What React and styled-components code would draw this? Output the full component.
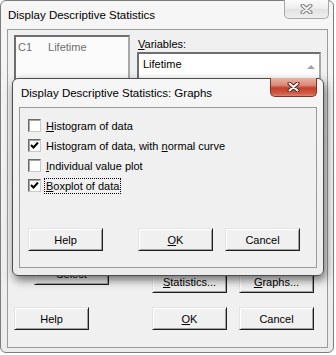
import styled, { createGlobalStyle } from "styled-components";

const GlobalStyle = createGlobalStyle`
  html, body {
    margin: 0;
    padding: 0;
    background: #ffffff;
  }
  body {
    font-family: "Liberation Sans", Arial, sans-serif;
    font-size: 11px;
    color: #000;
  }
`;

const Stage = styled.div`
  position: relative;
  width: 336px;
  height: 355px;
  overflow: hidden;
`;

const Frame = styled.div`
  box-sizing: border-box;
  width: ${(p) => p.$w}px;
  height: ${(p) => p.$h}px;
  display: flex;
  flex-direction: column;
  padding: ${(p) => p.$pad};
  border: 1px solid ${(p) => (p.$active ? "#4d4d4d" : "#7d7d7d")};
  border-radius: 6px;
  background: linear-gradient(#f6f6f6, #ececec);
`;

const Overlay = styled(Frame)`
  position: absolute;
  left: 12px;
  top: 78px;
  box-shadow: 2px 4px 10px rgba(0, 0, 0, 0.55);
`;

const TitleBar = styled.div`
  height: 28px;
  display: flex;
  align-items: flex-start;
  justify-content: space-between;
  flex-shrink: 0;
`;

const TitleText = styled.span`
  margin-top: 8px;
  padding-left: ${(p) => p.$indent}px;
  font-size: 11.5px;
  color: #000;
  white-space: nowrap;
`;

const CaptionClose = styled.div`
  box-sizing: border-box;
  margin-top: -1px;
  margin-right: ${(p) => p.$mr}px;
  width: ${(p) => p.$w}px;
  height: 19px;
  display: flex;
  align-items: center;
  justify-content: center;
  border: 1px solid ${(p) => (p.$red ? "#83342a" : "#a6a6a6")};
  border-top: none;
  border-radius: 0 0 5px 5px;
  background: ${(p) =>
    p.$red
      ? "linear-gradient(#eab1a3 0%, #d98a78 40%, #c2412c 55%, #cf5a44 85%, #e0846e 100%)"
      : "linear-gradient(#fbfbfb, #ececec 50%, #e2e2e2 51%, #eeeeee)"};
`;

const Client = styled.div`
  flex: 1;
  box-sizing: border-box;
  border: 1px solid #9b9b9b;
  background: #f0f0f0;
  display: flex;
  flex-direction: column;
  padding: ${(p) => p.$pad};
`;

const MainArea = styled.div`
  display: flex;
  gap: 7px;
  height: 258px;
`;

const LeftColumn = styled.div`
  width: 116px;
  display: flex;
  flex-direction: column;
`;

const RightColumn = styled.div`
  flex: 1;
  display: flex;
  flex-direction: column;
  padding-right: 1px;
`;

const ListBox = styled.div`
  box-sizing: border-box;
  height: 218px;
  border: 2px solid;
  border-color: #6e6e6e #a8a8a8 #a8a8a8 #6e6e6e;
  background: #fbfbfb;
  padding: 4px 3px 4px 2px;
  color: #6d6d6d;
  display: flex;
  gap: 16px;
`;

const FieldLabel = styled.div`
  margin: 3px 0 0 1px;
  height: 14px;
`;

const TextBox = styled.div`
  box-sizing: border-box;
  height: 160px;
  border: 2px solid;
  border-color: #6e6e6e #a8a8a8 #a8a8a8 #6e6e6e;
  background: #fff;
  display: flex;
  justify-content: space-between;
  padding: 4px 0 0 4px;
`;

const ScrollArrow = styled.div`
  width: 16px;
  display: flex;
  justify-content: center;
  padding-top: 7px;
  &::before {
    content: "";
    border-left: 4px solid transparent;
    border-right: 4px solid transparent;
    border-bottom: 4px solid #a3a3a3;
    height: 0;
  }
`;

const ButtonRow = styled.div`
  display: flex;
  gap: ${(p) => p.$gap}px;
  margin-top: ${(p) => p.$mt};
  margin-bottom: ${(p) => p.$mb || 0}px;
  padding-left: ${(p) => p.$pl || 0}px;
`;

const Button = styled.div`
  box-sizing: border-box;
  width: 75px;
  height: 23px;
  flex-shrink: 0;
  display: flex;
  align-items: center;
  justify-content: center;
  margin-left: ${(p) => p.$ml || 0}px;
  background: #f0f0f0;
  border: 1px solid;
  border-color: #e3e3e3 #1e1e1e #1e1e1e #e3e3e3;
  box-shadow: inset 1px 1px 0 #ffffff, inset -1px -1px 0 #a0a0a0;
  color: #000;
  font-size: 11px;
`;

const Options = styled.div`
  display: flex;
  flex-direction: column;
  gap: 7px;
`;

const OptionRow = styled.div`
  display: flex;
  align-items: center;
  height: 13px;
  gap: 3px;
`;

const Box = styled.div`
  box-sizing: border-box;
  width: 13px;
  height: 13px;
  border: 1px solid;
  border-color: #6a6a6a #c9c9c9 #c9c9c9 #6a6a6a;
  box-shadow: inset 1px 1px 0 #a5a5a5;
  background: #fff;
  display: flex;
  align-items: center;
  justify-content: center;
`;

const OptionLabel = styled.span`
  padding: 0 1px;
  line-height: 14px;
  border: 1px dotted ${(p) => (p.$focus ? "#000" : "transparent")};
  white-space: nowrap;
`;

const CloseGlyph = ({ red }) => (
  <svg width="13" height="10" viewBox="0 0 13 10">
    <path
      d="M2.5 1.5 L10.5 8.5 M10.5 1.5 L2.5 8.5"
      stroke={red ? "#5a2019" : "#7b7b7b"}
      strokeWidth="4"
      strokeLinecap="round"
    />
    <path
      d="M2.5 1.5 L10.5 8.5 M10.5 1.5 L2.5 8.5"
      stroke={red ? "#ffffff" : "#f4f4f4"}
      strokeWidth="2"
      strokeLinecap="round"
    />
  </svg>
);

const Check = () => (
  <svg width="9" height="9" viewBox="0 0 9 9">
    <path d="M1 4 L3.5 6.5 L8 1.5" stroke="#000" strokeWidth="2" fill="none" />
  </svg>
);

const options = [
  { label: <><u>H</u>istogram of data</>, checked: false },
  { label: <>Histogram of data, with <u>n</u>ormal curve</>, checked: true },
  { label: <><u>I</u>ndividual value plot</>, checked: false },
  { label: <><u>B</u>oxplot of data</>, checked: true, focus: true },
];

export default function App() {
  return (
    <Stage>
      <GlobalStyle />
      <Frame $w={334} $h={353} $pad="0 5px 4px 6px">
        <TitleBar>
          <TitleText $indent={1}>Display Descriptive Statistics</TitleText>
          <CaptionClose $w={45} $mr={-1}>
            <CloseGlyph />
          </CaptionClose>
        </TitleBar>
        <Client $pad="5px 5px 0 6px">
          <MainArea>
            <LeftColumn>
              <ListBox>
                <span>C1</span>
                <span>Lifetime</span>
              </ListBox>
              <ButtonRow $gap={0} $mt="9px" $pl={20}>
                <Button>Select</Button>
              </ButtonRow>
            </LeftColumn>
            <RightColumn>
              <FieldLabel>
                <u>V</u>ariables:
              </FieldLabel>
              <TextBox>
                <span>Lifetime</span>
                <ScrollArrow />
              </TextBox>
              <ButtonRow $gap={12} $mt="auto" $pl={15}>
                <Button>
                  <u>S</u>tatistics...
                </Button>
                <Button>
                  <u>G</u>raphs...
                </Button>
              </ButtonRow>
            </RightColumn>
          </MainArea>
          <ButtonRow $gap={0} $mt="14px">
            <Button>Help</Button>
            <Button $ml={63}>
              <u>O</u>K
            </Button>
            <Button $ml={12}>Cancel</Button>
          </ButtonRow>
        </Client>
      </Frame>

      <Overlay $w={312} $h={198} $pad="0 6px 7px 6px" $active>
        <TitleBar>
          <TitleText $indent={2}>Display Descriptive Statistics: Graphs</TitleText>
          <CaptionClose $w={47} $mr={0} $red>
            <CloseGlyph red />
          </CaptionClose>
        </TitleBar>
        <Client $pad="11px 8px 0 8px">
          <Options>
            {options.map((o, i) => (
              <OptionRow key={i}>
                <Box>{o.checked && <Check />}</Box>
                <OptionLabel $focus={o.focus}>{o.label}</OptionLabel>
              </OptionRow>
            ))}
          </Options>
          <ButtonRow $gap={0} $mt="auto" $mb={16}>
            <Button>Help</Button>
            <Button $ml={35}>
              <u>O</u>K
            </Button>
            <Button $ml={12}>Cancel</Button>
          </ButtonRow>
        </Client>
      </Overlay>
    </Stage>
  );
}
